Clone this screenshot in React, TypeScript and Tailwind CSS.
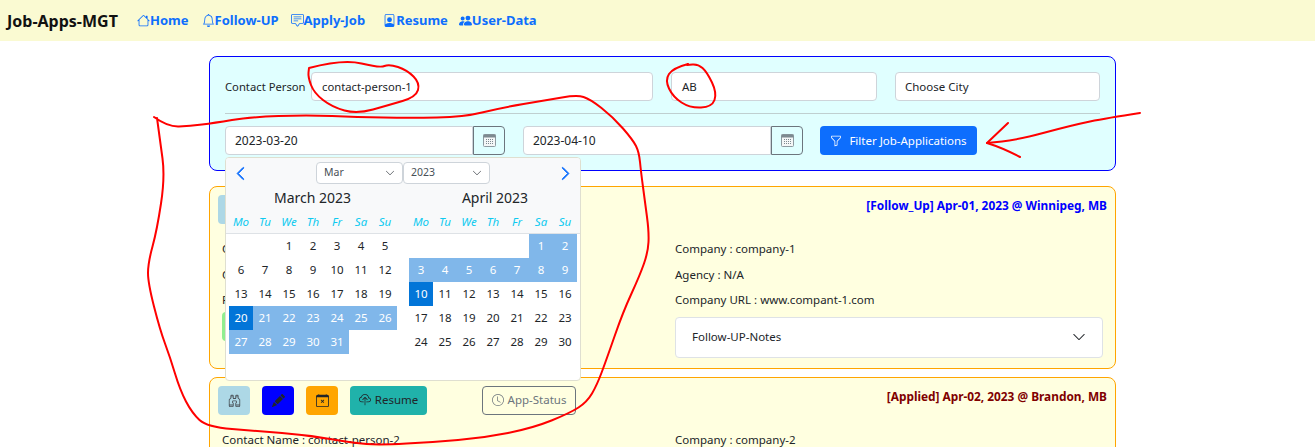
import { BsHouse, BsBell, BsChatSquareText, BsFilePerson, BsPeopleFill, BsFunnel, BsBinoculars, BsPencilFill, BsCalendarX, BsCloudUpload, BsClock, BsChevronLeft, BsChevronRight, BsChevronDown } from "react-icons/bs";

const navLinks = [
  { label: "Home", icon: BsHouse, cls: "ml-[19px]" },
  { label: "Follow-UP", icon: BsBell, cls: "ml-[13px]" },
  { label: "Apply-Job", icon: BsChatSquareText, cls: "ml-[12px]" },
  { label: "Resume", icon: BsFilePerson, cls: "ml-[18px]" },
  { label: "User-Data", icon: BsPeopleFill, cls: "ml-[11px]" },
];

// turns hand-drawn points into a smooth line
function smooth(pts: number[][]) {
  let d = `M${pts[0][0]} ${pts[0][1]}`;
  for (let i = 1; i < pts.length - 1; i++) {
    const mx = (pts[i][0] + pts[i + 1][0]) / 2;
    const my = (pts[i][1] + pts[i + 1][1]) / 2;
    d += ` Q${pts[i][0]} ${pts[i][1]} ${mx} ${my}`;
  }
  const last = pts[pts.length - 1];
  return d + ` L${last[0]} ${last[1]}`;
}

const bigLoop = [[154,117],[168,127],[190,126],[214,123],[250,117],[307,115],[357,117],[410,118],[464,117],[500,108],[547,100],[577,95],[590,99],[613,117],[633,140],[639,152],[641,172],[645,202],[649,232],[648,252],[640,275],[623,312],[607,358],[597,385],[587,402],[570,413],[533,428],[483,438],[433,442],[380,445],[353,443],[307,435],[257,431],[207,427],[192,413],[180,390],[170,357],[160,330],[148,283],[148,263],[157,230],[165,177],[160,140],[157,118]];
const personLoop = [[309,68],[343,59],[380,68],[389,64],[407,70],[420,83],[416,97],[389,105],[357,114],[332,107],[314,93],[308,77],[309,68]];
const abLoop = [[688,64],[673,68],[665,80],[673,97],[690,108],[712,107],[717,93],[707,72],[698,64],[687,65]];
const arrowTail = [[1140,113],[1107,118],[1073,125],[1017,140],[987,143]];

function Scribbles() {
  return (
    <svg className="absolute left-0 top-0 pointer-events-none" width="1315" height="447" fill="none" stroke="#ff0000" strokeWidth="2" strokeLinejoin="round" strokeLinecap="round">
      <path d={smooth(bigLoop)} />
      <path d={smooth(personLoop)} />
      <path d={smooth(abLoop)} />
      <path d={smooth(arrowTail)} />
      <path d="M1008 123 L987 143 Q1003 148 1020 157" />
    </svg>
  );
}

function CalendarIcon() {
  return (
    <svg width="13" height="13" viewBox="0 0 13 13">
      <rect x="0.5" y="0.5" width="12" height="12" rx="1" fill="#f4f7f7" stroke="#8d9aa0" />
      <rect x="0.5" y="0.5" width="12" height="3" fill="#7d8a90" />
      {[5, 7, 9].map((y) =>
        [3, 5, 7, 9].map((x) => <rect key={`${x}-${y}`} x={x} y={y} width="1" height="1" fill="#7d8a90" />)
      )}
    </svg>
  );
}

function DateInput({ value }: { value: string }) {
  return (
    <div className="flex w-[280px] h-[29px]">
      <div className="flex-1 bg-white border border-[#ced4da] rounded-l-[4px] px-[9px] pt-[1px] flex items-center text-[12px]">{value}</div>
      <div className="w-[32px] border border-[#6c757d] rounded-r-[4px] flex items-center justify-center">
        <CalendarIcon />
      </div>
    </div>
  );
}

function MonthHead({ title, cls }: { title: string; cls: string }) {
  return (
    <div className="w-[168px]">
      <div className={`h-[18px] mt-[5px] text-center text-[14px] leading-[18px] text-[#212529] ${cls}`}>{title}</div>
      <div className="grid grid-cols-7 h-[24px] mt-[3px] items-center text-center italic text-[#0dcaf0]">
        {["Mo", "Tu", "We", "Th", "Fr", "Sa", "Su"].map((w) => (
          <span key={w}>{w}</span>
        ))}
      </div>
    </div>
  );
}

function MonthDays({ blanks, days, tone }: { blanks: number; days: number; tone: (d: number) => string | undefined }) {
  const cells = Array.from({ length: days }, (_, i) => i + 1);
  return (
    <div className="grid grid-cols-[repeat(7,24px)] auto-rows-[24px] w-[168px] text-center leading-[24px]">
      {Array.from({ length: blanks }, (_, i) => (
        <span key={i} />
      ))}
      {cells.map((d) => {
        const t = tone(d);
        return (
          <span key={d} className={t === "start" ? "bg-[#0275d8] text-white" : t === "range" ? "bg-[#80b7ea] text-white" : "text-[#212529]"}>
            {d}
          </span>
        );
      })}
    </div>
  );
}

function MiniSelect({ value }: { value: string }) {
  return (
    <div className="w-[87px] h-[22px] bg-white border border-[#ced4da] rounded-[4px] flex items-center justify-between pl-[7px] pr-[7px] text-[10.5px] text-[#495057]">
      <span>{value}</span>
      <BsChevronDown className="w-[10px] h-[10px] text-[#343a40]" />
    </div>
  );
}

function DatePicker() {
  return (
    <div className="absolute left-[16px] top-[101px] w-[356px] h-[224px] z-10 bg-white border border-[#dfdfd0] rounded-[4px] overflow-hidden">
      <div className="bg-[#f8f9fa] border-b border-[#dee2e6] h-[76px]">
        <div className="flex items-center h-[26px] pt-[4px] px-[7px]">
          <BsChevronLeft className="w-[15px] h-[15px] text-[#0d6efd] stroke-1" />
          <div className="flex ml-[68px]">
            <MiniSelect value="Mar" />
            <MiniSelect value="2023" />
          </div>
          <BsChevronRight className="w-[15px] h-[15px] text-[#0d6efd] stroke-1 ml-auto" />
        </div>
        <div className="flex gap-[12px] px-[3px]">
          <MonthHead title="March 2023" cls="pr-[1px]" />
          <MonthHead title="April 2023" cls="pl-[4px]" />
        </div>
      </div>
      <div className="flex gap-[12px] px-[3px]">
        <MonthDays blanks={2} days={31} tone={(d) => (d === 20 ? "start" : d > 20 ? "range" : undefined)} />
        <MonthDays blanks={5} days={30} tone={(d) => (d === 10 ? "start" : d < 10 ? "range" : undefined)} />
      </div>
    </div>
  );
}

function JobCard({ status, statusCls, name, company, url, showNotes }: { status: string; statusCls: string; name: string; company: string; url: string; showNotes?: boolean }) {
  return (
    <div className="border border-[#ffa500] bg-[#ffffe0] rounded-[8px] px-[8px] pt-[8px] pb-[10px] text-[#212529] shrink-0">
      <div className="flex items-start h-[29px]">
        <div className="w-[32px] h-[29px] rounded-[4px] bg-[#add8e6] flex items-center justify-center">
          <BsBinoculars className="w-[13px] h-[13px] text-[#495057]" />
        </div>
        <div className="ml-[12px] w-[32px] h-[29px] rounded-[4px] bg-[#0000ff] flex items-center justify-center">
          <BsPencilFill className="w-[13px] h-[13px] text-[#212529]" />
        </div>
        <div className="ml-[12px] w-[32px] h-[29px] rounded-[4px] bg-[#ffa500] flex items-center justify-center">
          <BsCalendarX className="w-[13px] h-[13px] text-[#212529]" />
        </div>
        <div className="ml-[12px] w-[77px] h-[29px] rounded-[4px] bg-[#20b2aa] flex items-center justify-center gap-[4px] text-[#212529]">
          <BsCloudUpload className="w-[12px] h-[12px]" />
          Resume
        </div>
        <div className="ml-[55px] w-[94px] h-[29px] rounded-[4px] border border-[#6c757d] flex items-center justify-center gap-[4px] text-[#6c757d]">
          <BsClock className="w-[12px] h-[12px]" />
          App-Status
        </div>
        <div className={`ml-auto mt-[1px] font-bold text-[11.85px] leading-[18px] ${statusCls}`}>{status}</div>
      </div>
      <div className="grid grid-cols-[457px_1fr] pt-[16px]">
        <div className="pl-[4px]">
          <p className="h-[18px] mb-[7.5px] leading-[18px]">Contact Name : {name}</p>
          <p className="h-[18px] mb-[7.5px] leading-[18px]">Contact Phone : N/A</p>
          <p className="h-[18px] mb-[3px] leading-[18px]">Position : N/A</p>
          <div className="w-[60px] h-[29px] rounded-[4px] bg-[#90ee90]" />
        </div>
        <div className="pr-[4px]">
          <p className="h-[18px] mb-[7.5px] leading-[18px]">Company : {company}</p>
          <p className="h-[18px] mb-[7.5px] leading-[18px]">Agency : N/A</p>
          <p className="h-[18px] mb-[7.5px] leading-[18px]">Company URL : {url}</p>
          {showNotes && (
            <div className="h-[41px] bg-white border border-[#dee2e6] rounded-[4px] flex items-center justify-between pl-[16px] pr-[16px]">
              Follow-UP-Notes
              <BsChevronDown className="w-[14px] h-[14px]" />
            </div>
          )}
        </div>
      </div>
    </div>
  );
}

export default function App() {
  return (
    <div className="relative h-[447px] overflow-hidden bg-white text-[11.5px] text-[#212529] font-['Noto_Sans',sans-serif]">
      <nav className="h-[41px] bg-[#fafad2] flex items-center pl-[7px]">
        <span className="w-[111px] font-bold text-[16px] text-[#111] whitespace-nowrap">Job-Apps-MGT</span>
        {navLinks.map(({ label, icon: Icon, cls }) => (
          <a key={label} className={`flex items-center font-bold text-[13px] text-[#0d6efd] ${cls}`}>
            <Icon className="w-[13px] h-[13px]" />
            {label}
          </a>
        ))}
      </nav>

      <main className="w-[907px] ml-[209px] mt-[15px] flex flex-col relative">
        <section className="h-[115px] border border-[#0000ff] bg-[#e0ffff] rounded-[8px] px-[15px] pt-[15px]">
          <div className="flex items-center h-[29px]">
            <span className="w-[86px] pt-[1px] text-[11.25px]">Contact Person</span>
            <div className="w-[342px] h-[29px] pt-[1px] text-[11.25px] bg-white border border-[#ced4da] rounded-[4px] flex items-center px-[10px]">contact-person-1</div>
            <div className="ml-[18px] w-[206px] h-[29px] pt-[1px] bg-white border border-[#ced4da] rounded-[4px] flex items-center px-[10px]">AB</div>
            <div className="ml-[18px] w-[205px] h-[29px] pt-[1px] bg-white border border-[#ced4da] rounded-[4px] flex items-center px-[9px]">Choose City</div>
          </div>
          <div className="h-px bg-[#bfcfd0] mt-[12px] mb-[12px]" />
          <div className="flex items-center gap-[18px]">
            <DateInput value="2023-03-20" />
            <DateInput value="2023-04-10" />
            <button className="-ml-[1px] w-[157px] h-[29px] pt-[1px] rounded-[4px] bg-[#0d6efd] text-white flex items-center justify-center gap-[7px]">
              <BsFunnel className="w-[12px] h-[12px]" />
              Filter Job-Applications
            </button>
          </div>
        </section>

        <div className="mt-[15px] flex flex-col gap-[8px]">
          <JobCard status="[Follow_Up] Apr-01, 2023 @ Winnipeg, MB" statusCls="text-[#0000ff]" name="contact-person-1" company="company-1" url="www.compant-1.com" showNotes />
          <JobCard status="[Applied] Apr-02, 2023 @ Brandon, MB" statusCls="text-[#800000]" name="contact-person-2" company="company-2" url="www.compant-2.com" />
        </div>

        <DatePicker />
      </main>

      <Scribbles />
    </div>
  );
}
